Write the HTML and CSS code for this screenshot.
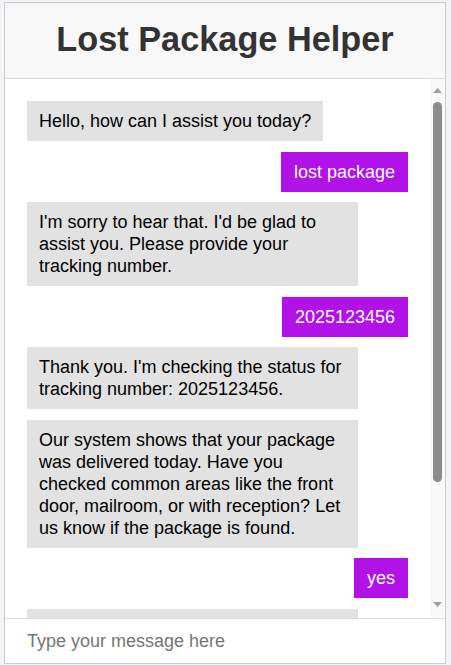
FILE: index.html
```html
<!DOCTYPE html>
<html lang="en">
<head>
<meta charset="utf-8">
<title>Lost Package Helper</title>
<link rel="stylesheet" href="styles.css">
</head>
<body>
<div class="chat">
  <header class="chat-header">
    <h1 class="chat-title">Lost Package Helper</h1>
  </header>
  <div class="body-row">
    <div class="messages">
      <div class="msg bot">Hello, how can I assist you today?</div>
      <div class="msg user">lost package</div>
      <div class="msg bot">I'm sorry to hear that. I'd be glad to assist you. Please provide your tracking number.</div>
      <div class="msg user">2025123456</div>
      <div class="msg bot">Thank you. I'm checking the status for tracking number: 2025123456.</div>
      <div class="msg bot">Our system shows that your package was delivered today. Have you checked common areas like the front door, mailroom, or with reception? Let us know if the package is found.</div>
      <div class="msg user">yes</div>
      <div class="msg bot">Great! I'm glad to hear that your package has been found. Is there anything else I can help you with?</div>
    </div>
    <div class="scrollbar" aria-hidden="true">
      <svg class="arrow" width="9" height="5" viewBox="0 0 9 5"><path d="M0 5 L4.5 0 L9 5 Z" fill="#a0a0a0"/></svg>
      <div class="thumb"></div>
      <div class="track-rest"></div>
      <svg class="arrow" width="9" height="5" viewBox="0 0 9 5"><path d="M0 0 L4.5 5 L9 0 Z" fill="#a0a0a0"/></svg>
    </div>
  </div>
  <div class="composer">
    <input class="composer-input" type="text" placeholder="Type your message here" autofocus>
  </div>
</div>
</body>
</html>
```

FILE: styles.css
```css
html, body {
  margin: 0;
  padding: 0;
}

body {
  background: #f4f3f8;
  font-family: "Liberation Sans", Arial, sans-serif;
}

.chat {
  box-sizing: border-box;
  width: 442px;
  height: 662px;
  margin: 2px 5px 0 4px;
  border: 1px solid #cccccf;
  background: #ffffff;
  display: flex;
  flex-direction: column;
}

.chat-header {
  box-sizing: border-box;
  height: 76px;
  flex: 0 0 auto;
  background: #f8f8f8;
  border-bottom: 1px solid #dddddd;
  padding-top: 17px;
  text-align: center;
}

.chat-title {
  margin: 0;
  font-size: 34.3px;
  font-weight: bold;
  color: #333333;
}

.body-row {
  flex: 1 1 auto;
  min-height: 0;
  display: flex;
}

.messages {
  flex: 1 1 auto;
  min-width: 0;
  overflow: hidden;
  padding: 22px;
  display: flex;
  flex-direction: column;
  gap: 10.5px;
}

.scrollbar {
  box-sizing: border-box;
  flex: 0 0 15px;
  width: 15px;
  background: #f9f9f9;
  display: flex;
  flex-direction: column;
  align-items: center;
  padding: 9px 0 11px;
}

.arrow {
  display: block;
  flex: 0 0 auto;
}

.thumb {
  flex: 0 0 auto;
  width: 9px;
  height: 380px;
  margin-top: 9px;
  border-radius: 4.5px;
  background: #8c8c8c;
}

.track-rest {
  flex: 1 1 auto;
}

.msg {
  font-size: 18px;
  line-height: 22px;
  padding: 9px 12px;
  max-width: 307px;
  flex: 0 0 auto;
}

.bot {
  align-self: flex-start;
  background: #e2e2e2;
  color: #000000;
}

.user {
  align-self: flex-end;
  background: #b012e8;
  color: #ffffff;
  padding-left: 13px;
  padding-right: 13px;
}

.composer {
  flex: 0 0 auto;
  border-top: 1px solid #dddddd;
  display: flex;
}

.composer-input {
  box-sizing: border-box;
  width: 100%;
  height: 44px;
  border: none;
  outline: none;
  padding: 0 22px;
  margin: 0;
  font-family: "Liberation Sans", Arial, sans-serif;
  font-size: 18px;
  line-height: 22px;
  color: #000000;
  background: #ffffff;
}

.composer-input::placeholder {
  color: #757575;
}
```
